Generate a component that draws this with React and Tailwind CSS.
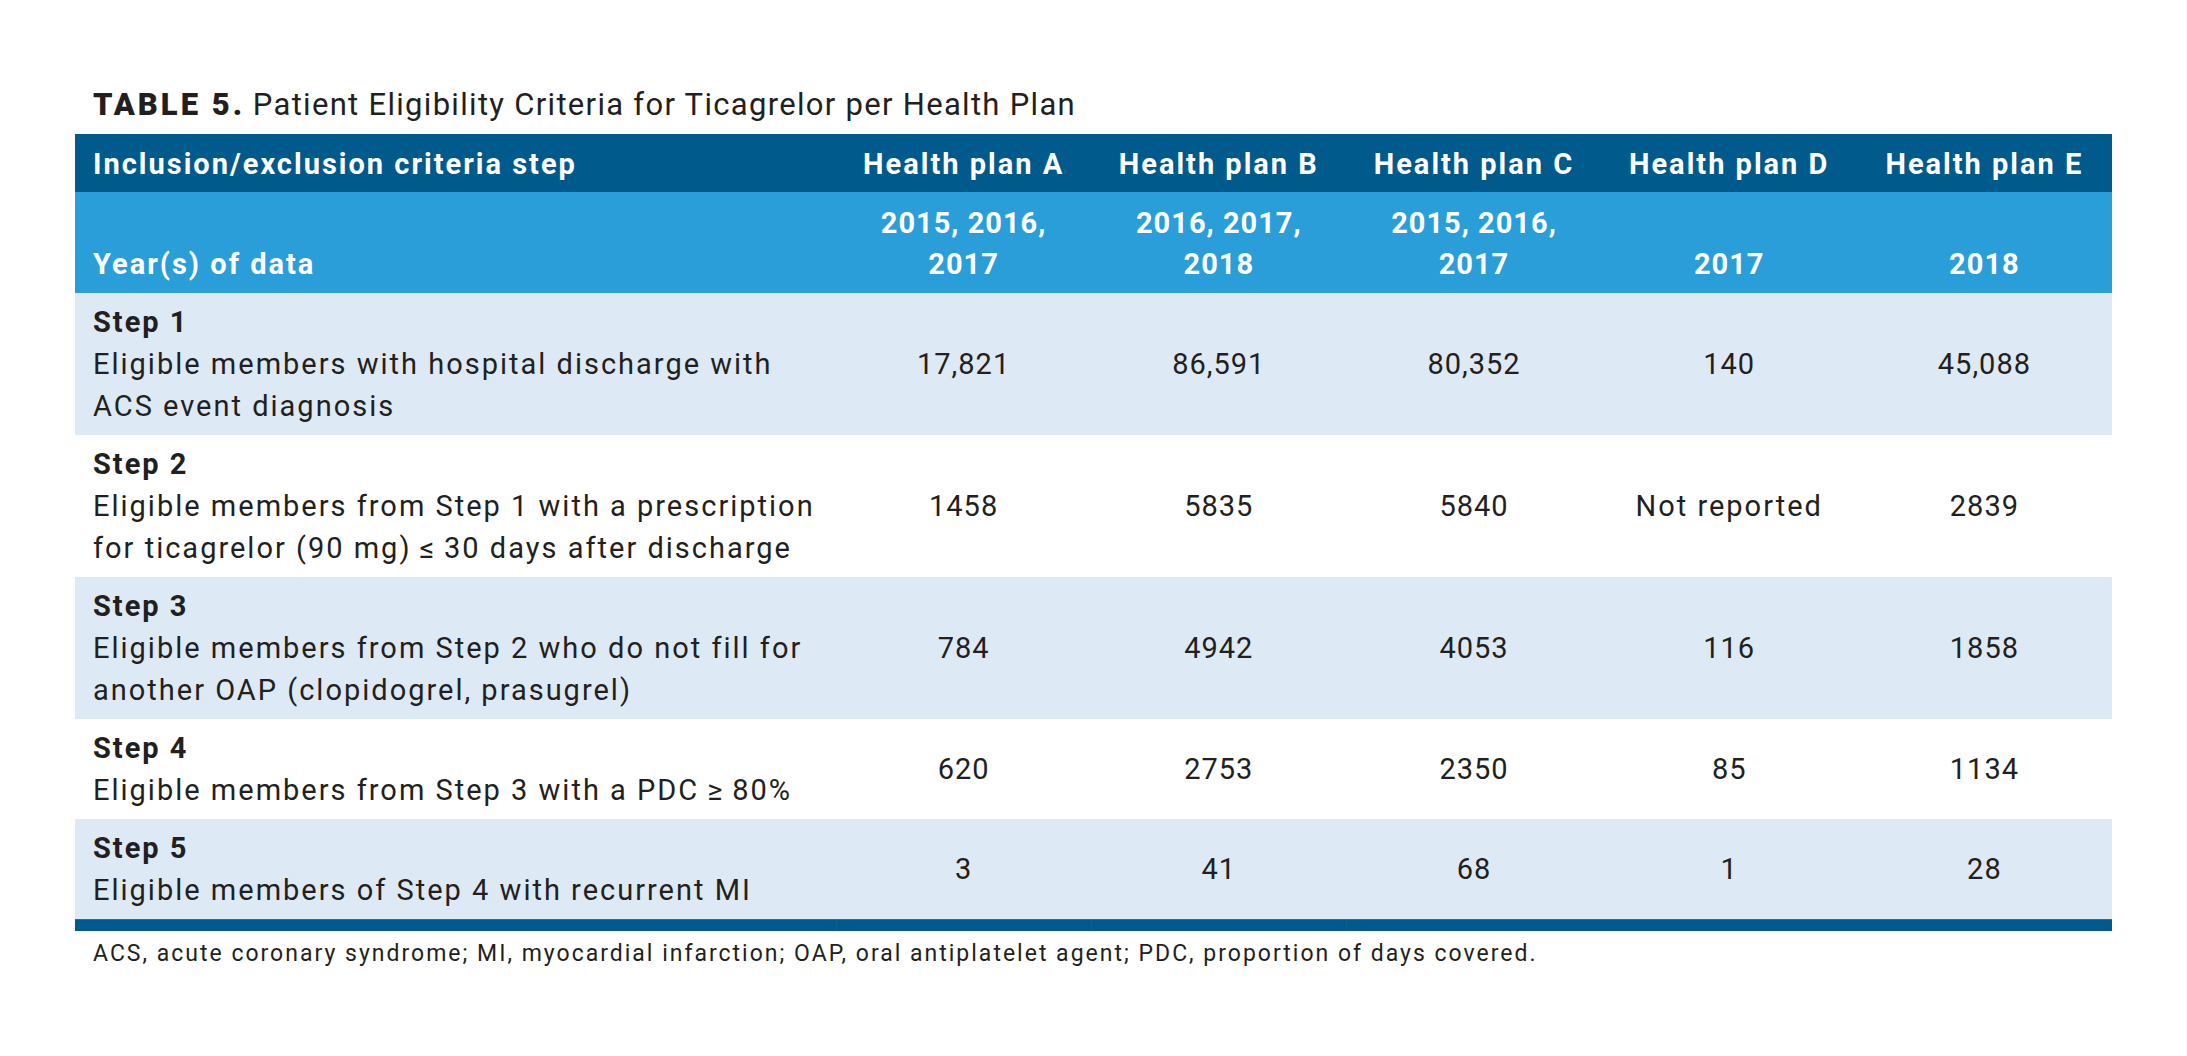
import React from 'react'

const plans = ['Health plan A', 'Health plan B', 'Health plan C', 'Health plan D', 'Health plan E']

const years = [
  ['2015, 2016,', '2017'],
  ['2016, 2017,', '2018'],
  ['2015, 2016,', '2017'],
  ['', '2017'],
  ['', '2018'],
]

const steps = [
  {
    title: 'Step 1',
    lines: ['Eligible members with hospital discharge with', 'ACS event diagnosis'],
    values: ['17,821', '86,591', '80,352', '140', '45,088'],
    shaded: true,
  },
  {
    title: 'Step 2',
    lines: ['Eligible members from Step 1 with a prescription', 'for ticagrelor (90 mg)\u2009\u2264\u200930 days after discharge'],
    values: ['1458', '5835', '5840', 'Not reported', '2839'],
    shaded: false,
  },
  {
    title: 'Step 3',
    lines: ['Eligible members from Step 2 who do not fill for', 'another OAP (clopidogrel, prasugrel)'],
    values: ['784', '4942', '4053', '116', '1858'],
    shaded: true,
  },
  {
    title: 'Step 4',
    lines: ['Eligible members from Step 3 with a PDC\u2009\u2265\u200980%'],
    values: ['620', '2753', '2350', '85', '1134'],
    shaded: false,
  },
  {
    title: 'Step 5',
    lines: ['Eligible members of Step 4 with recurrent MI'],
    values: ['3', '41', '68', '1', '28'],
    shaded: true,
  },
]

const gridCols = 'grid grid-cols-[761px_repeat(5,1fr)]'

// numbers get tighter tracking than words
const isWord = (v) => /[a-z]/i.test(v)

const App = () => {
  return (
    <div className="min-h-[1056px] bg-white pl-[75px] pt-[86px] font-['Roboto',sans-serif] text-[#231f20]">
      <div className="w-[2037px]">
        <h2 className="mb-[11px] pl-[18px] text-[31px] leading-[37px]">
          <span className="font-black tracking-[3px]">TABLE 5.</span>{' '}
          <span className="font-normal tracking-[1.3px]">Patient Eligibility Criteria for Ticagrelor per Health Plan</span>
        </h2>

        {/* header */}
        <div className={`${gridCols} h-[58px] items-center bg-[#005a8c] pt-[4px] text-[29px] font-bold tracking-[2px] text-white`}>
          <div className="pl-[18px]">Inclusion/exclusion criteria step</div>
          {plans.map((p) => (
            <div key={p} className="text-center">{p}</div>
          ))}
        </div>

        {/* years */}
        <div className={`${gridCols} h-[101px] items-end bg-[#299ed9] pb-[8px] text-[29px] font-bold leading-[41px] text-white`}>
          <div className="pl-[18px] tracking-[2px]">Year(s) of data</div>
          {years.map((y, i) => (
            <div key={i} className="text-center tracking-[1px]">
              <div>{y[0] || '\u00a0'}</div>
              <div>{y[1]}</div>
            </div>
          ))}
        </div>

        {steps.map((s) => (
          <div
            key={s.title}
            className={`${gridCols} items-center py-[8px] text-[29px] leading-[42px] ${s.shaded ? 'bg-[#dde9f5]' : 'bg-white'}`}
          >
            <div className="pl-[18px] tracking-[2px]">
              <div className="font-bold">{s.title}</div>
              {s.lines.map((l) => (
                <div key={l}>{l}</div>
              ))}
            </div>
            {s.values.map((v, i) => (
              <div key={i} className={`text-center ${isWord(v) ? 'tracking-[2px]' : 'tracking-[1px]'}`}>{v}</div>
            ))}
          </div>
        ))}

        {/* bottom rule */}
        <div className={`${gridCols} h-[12px] border-t border-[#1d6f9c] bg-[#005a8c]`}>
          <div />
          <div className="border-l border-[#0a5f8f]" />
          <div className="border-l border-[#0a5f8f]" />
          <div className="border-l border-[#0a5f8f]" />
          <div />
          <div />
        </div>

        <p className="mt-[8px] pl-[18px] text-[23px] leading-[30px] tracking-[2px]">
          ACS, acute coronary syndrome; MI, myocardial infarction; OAP, oral antiplatelet agent; PDC, proportion of days covered.
        </p>
      </div>
    </div>
  )
}

export default App
